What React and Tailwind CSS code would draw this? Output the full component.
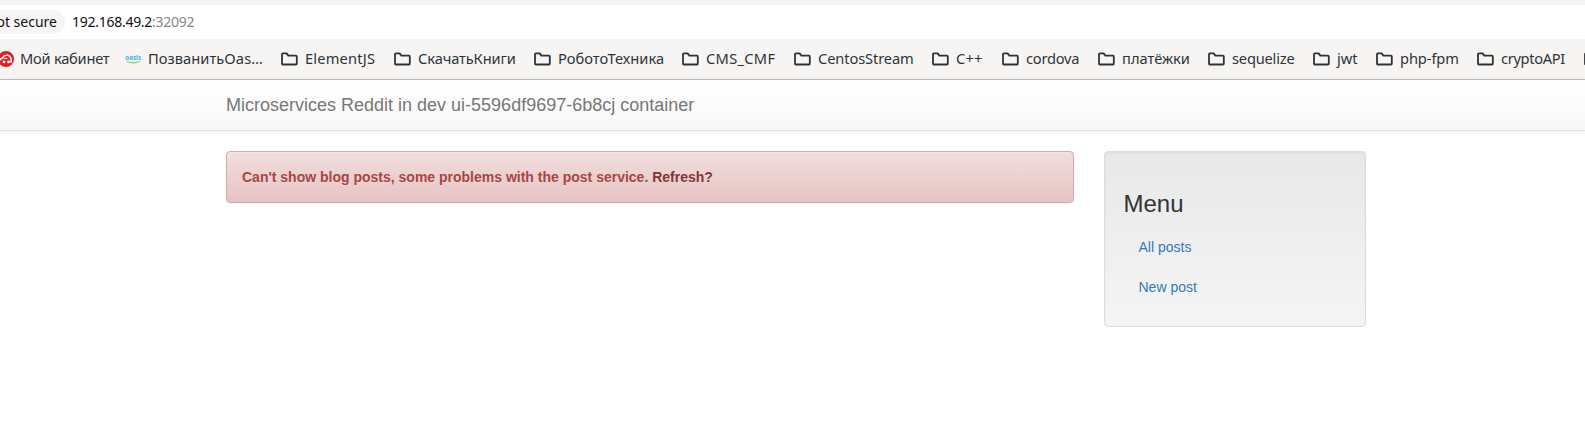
const folders = [
  { name: "ElementJS", box: "w-[113px]", text: "tracking-[0.18px]" },
  { name: "СкачатьКниги", box: "w-[140px]", text: "tracking-[-0.12px]" },
  { name: "РоботоТехника", box: "w-[148px]", text: "tracking-[0px]" },
  { name: "CMS_CMF", box: "w-[112px]", text: "tracking-[0.3px]" },
  { name: "CentosStream", box: "w-[138px]", text: "tracking-[-0.12px]" },
  { name: "C++", box: "w-[70px]", text: "tracking-[0.2px]" },
  { name: "cordova", box: "w-[96px]", text: "tracking-[-0.25px]" },
  { name: "платёжки", box: "w-[110px]", text: "tracking-[0px]" },
  { name: "sequelize", box: "w-[105px]", text: "tracking-[-0.2px]" },
  { name: "jwt", box: "w-[63px]", text: "tracking-[0px]" },
  { name: "php-fpm", box: "w-[101px]", text: "tracking-[-0.1px]" },
  { name: "cryptoAPI", box: "w-[107px]", text: "tracking-[-0.33px]" },
  { name: "", box: "w-[20px]", text: "tracking-[0px]" },
];

function FolderIcon() {
  return (
    <svg className="mr-[7px] h-4 w-[17px] shrink-0" viewBox="0 0 17 16" fill="none" stroke="#2e3436" strokeWidth="1.8" strokeLinejoin="round">
      <path d="M1 3.2 Q1 2.4 1.8 2.4 H5.7 L7.3 4.6 H14.9 Q15.8 4.6 15.8 5.4 V12.7 Q15.8 13.5 14.9 13.5 H1.8 Q1 13.5 1 12.7 Z" />
    </svg>
  );
}

function CabinetIcon() {
  return (
    <svg className="h-4 w-4 shrink-0" viewBox="0 0 16 16">
      <circle cx="8" cy="8" r="8" fill="#df1f22" />
      <path d="M1.5 9.8 Q1.8 7.8 4.3 7.2 Q6.2 3.6 9.8 4.2 Q13.5 5 13.3 10.8 H11.6" fill="none" stroke="#fff" strokeWidth="1.4" />
      <path d="M5.8 7.4 H9.4" stroke="#fff" strokeWidth="1" />
      <circle cx="6" cy="10.9" r="1.4" fill="#fff" />
      <circle cx="10.5" cy="10.9" r="1.4" fill="#fff" />
    </svg>
  );
}

function OasisIcon() {
  return (
    <svg className="h-4 w-[17px] shrink-0" viewBox="0 0 17 16">
      <text x="0.3" y="9" fontSize="7.5" fontWeight="700" fill="#35b4e6" textLength="15.8" lengthAdjust="spacingAndGlyphs" fontFamily="Open Sans, sans-serif">oasis</text>
      <path d="M1.5 10.5 Q8.5 14 15.2 10.5 Q8.5 12 1.5 10.5Z" fill="#91cb62" stroke="#91cb62" strokeWidth=".5" />
    </svg>
  );
}

export default function App() {
  return (
    <div className="h-[424px] w-[1585px] overflow-hidden bg-white font-['Liberation_Sans',Arial,sans-serif] text-sm leading-5 text-[#333]">
      <header className="font-['Noto_Sans',sans-serif] text-[14.67px] whitespace-nowrap text-[#2e3436]">
        <div className="h-[5px] bg-[#f6f5f4]" />
        <div className="flex h-[34px] items-center bg-white">
          <div className="flex h-6 w-[65px] items-center justify-end rounded-r-full bg-[#f6f5f4] pr-2 text-[14px] text-[#111]">ot secure</div>
          <div className="ml-[7px] text-[14px] tracking-[-0.27px] text-[#111]">192.168.49.2<span className="text-[#888]">:32092</span></div>
        </div>
        <nav className="flex h-[41px] items-center overflow-hidden border-b border-[#c5beb9] bg-[#f6f5f4] pb-px">
          <div className="-ml-[2px] flex w-[127px] shrink-0 items-center gap-[6px]">
            <CabinetIcon />
            <span className="w-[89px] pb-[2px] tracking-[-0.25px]">Мой кабинет</span>
          </div>
          <div className="flex w-[156px] shrink-0 items-center gap-[6px]">
            <OasisIcon />
            <span className="w-[114px] pb-[2px] tracking-[0.05px]">ПозванитьOas…</span>
          </div>
          {folders.map((f, i) => (
            <div key={i} className={`flex shrink-0 items-center ${f.box}`}>
              <FolderIcon />
              <span className={`pb-[2px] ${f.text}`}>{f.name}</span>
            </div>
          ))}
        </nav>
      </header>
      <div className="mb-5 flex h-[51px] items-center border-b border-[#e3e3e3] bg-linear-to-b from-white to-[#f8f8f8] pl-[226px] shadow-[0_1px_5px_rgba(0,0,0,0.075)]">
        <span className="text-lg leading-5 text-[#777] [text-shadow:0_1px_0_rgba(255,255,255,0.25)]">Microservices Reddit in dev ui-5596df9697-6b8cj container</span>
      </div>
      <main className="ml-[226px] flex w-[1140px] items-start justify-between">
        <div className="h-[52px] w-[848px] rounded border border-[#dca7a7] bg-linear-to-b from-[#f2dede] to-[#e7c3c3] p-[15px] font-bold text-[#a94442] shadow-[inset_0_1px_0_rgba(255,255,255,0.25),0_1px_2px_rgba(0,0,0,0.05)] [text-shadow:0_1px_0_rgba(255,255,255,0.2)]">
          Can't show blog posts, some problems with the post service. <a className="text-[#843534]">Refresh?</a>
        </div>
        <aside className="h-[176px] w-[262px] rounded border border-[#dcdcdc] bg-linear-to-b from-[#e8e8e8] to-[#f5f5f5] py-[19px] pr-[19px] pl-[18.5px] shadow-[inset_0_1px_3px_rgba(0,0,0,0.05),0_1px_0_rgba(255,255,255,0.1)]">
          <h3 className="mt-5 mb-[10px] text-2xl leading-[26.4px]">Menu</h3>
          <a className="block px-[15px] py-[10px] text-[#337ab7]">All posts</a>
          <a className="block px-[15px] py-[10px] text-[#337ab7]">New post</a>
        </aside>
      </main>
    </div>
  );
}
